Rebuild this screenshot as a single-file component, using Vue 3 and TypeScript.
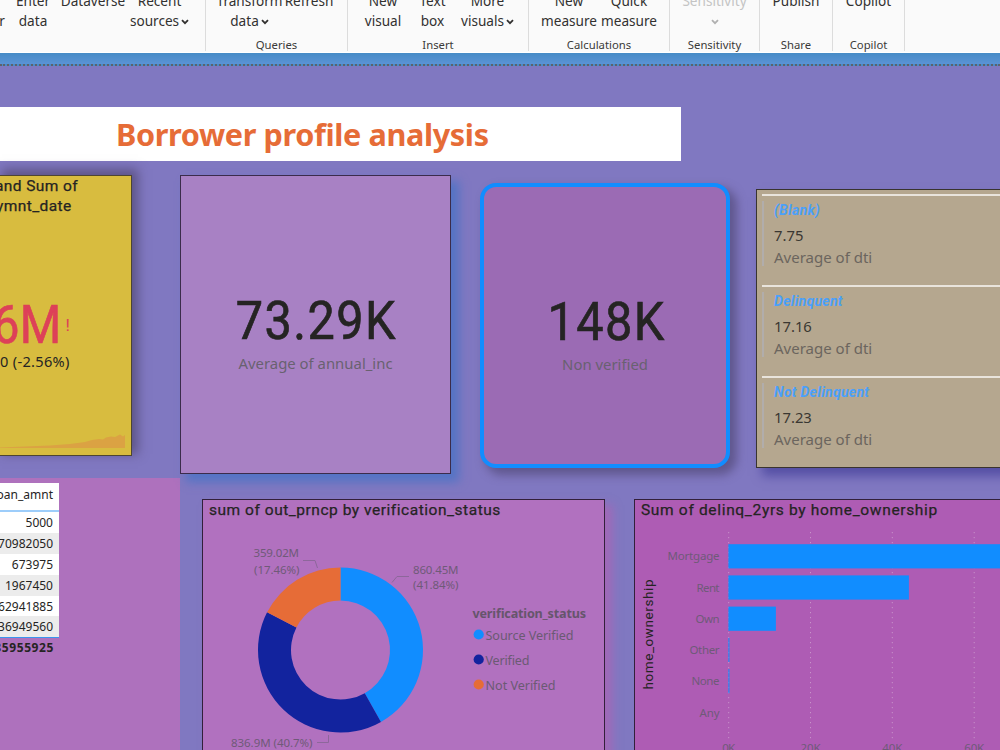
<script setup lang="ts">
import { computed } from 'vue'

interface RibbonButton {
  top: string
  bottom?: string
  width: number
  menu?: boolean
  disabled?: boolean
}

interface RibbonGroup {
  label: string
  width: number
  buttons: RibbonButton[]
}

const groups: RibbonGroup[] = [
  {
    label: '',
    width: 206,
    buttons: [
      { top: '', bottom: 'r', width: 4 },
      { top: 'Enter', bottom: 'data', width: 58 },
      { top: 'Dataverse', width: 62 },
      { top: 'Recent', bottom: 'sources', width: 71, menu: true },
    ],
  },
  {
    label: 'Queries',
    width: 142,
    buttons: [
      { top: 'Transform', bottom: 'data', width: 65, menu: true },
      { top: 'Refresh', width: 54 },
    ],
  },
  {
    label: 'Insert',
    width: 181,
    buttons: [
      { top: 'New', bottom: 'visual', width: 48 },
      { top: 'Text', bottom: 'box', width: 51 },
      { top: 'More', bottom: 'visuals', width: 59, menu: true },
    ],
  },
  {
    label: 'Calculations',
    width: 141,
    buttons: [
      { top: 'New', bottom: 'measure', width: 60 },
      { top: 'Quick', bottom: 'measure', width: 60 },
    ],
  },
  {
    label: 'Sensitivity',
    width: 90,
    buttons: [{ top: 'Sensitivity', bottom: '', width: 70, menu: true, disabled: true }],
  },
  { label: 'Share', width: 73, buttons: [{ top: 'Publish', width: 60 }] },
  { label: 'Copilot', width: 72, buttons: [{ top: 'Copilot', width: 60 }] },
]

const loanRows = ['5000', '270982050', '673975', '1967450', '62941885', '336949560']

const dtiRows = [
  { status: '(Blank)', value: '7.75' },
  { status: 'Delinquent', value: '17.16' },
  { status: 'Not Delinquent', value: '17.23' },
]

const statuses = [
  { name: 'Source Verified', value: 860.45, color: '#118dff', y: 635, length: 88 },
  { name: 'Verified', value: 836.9, color: '#12239e', y: 660, length: 44 },
  { name: 'Not Verified', value: 359.02, color: '#e66c37', y: 685, length: 70 },
]

const cx = 340.5
const cy = 650
const outer = 82.5
const inner = 49.5

function point(radius: number, turn: number) {
  const angle = turn * Math.PI * 2
  return `${(cx + radius * Math.sin(angle)).toFixed(2)} ${(cy - radius * Math.cos(angle)).toFixed(2)}`
}

const slices = computed(() => {
  const total = statuses.reduce((sum, s) => sum + s.value, 0)
  let start = 0
  return statuses.map((s) => {
    const end = start + s.value / total
    const large = end - start > 0.5 ? 1 : 0
    const d = `M${point(outer, start)} A${outer} ${outer} 0 ${large} 1 ${point(outer, end)} L${point(inner, end)} A${inner} ${inner} 0 ${large} 0 ${point(inner, start)} Z`
    start = end
    return { color: s.color, d }
  })
})

const ownership = [
  { name: 'Mortgage', width: 280, length: 52 },
  { name: 'Rent', width: 180.5, length: 23 },
  { name: 'Own', width: 47.5, length: 24 },
  { name: 'Other', width: 1, length: 30 },
  { name: 'None', width: 1, length: 28 },
  { name: 'Any', width: 0, length: 20 },
]

const ticks = [
  { label: '0K', x: 728.7, length: 13 },
  { label: '20K', x: 810.5, length: 20 },
  { label: '40K', x: 892.3, length: 20 },
  { label: '60K', x: 974.2, length: 20 },
]
</script>

<template>
  <div class="app">
    <header class="ribbon">
      <div
        v-for="(group, i) in groups"
        :key="i"
        class="ribbon__group"
        :style="{ width: `${group.width}px` }"
      >
        <div class="ribbon__buttons">
          <div
            v-for="(button, j) in group.buttons"
            :key="j"
            class="ribbon__button"
            :class="{ 'ribbon__button--disabled': button.disabled }"
            :style="{ width: `${button.width}px` }"
          >
            <span>{{ button.top || '&nbsp;' }}</span>
            <span class="ribbon__second">
              {{ button.bottom }}
              <svg v-if="button.menu" class="chevron" width="8" height="6" viewBox="0 0 8 6">
                <path d="M1 1.2 4 4.2 7 1.2" fill="none" stroke="currentColor" stroke-width="1.8" />
              </svg>
            </span>
          </div>
        </div>
        <div class="ribbon__label">{{ group.label }}</div>
      </div>
    </header>

    <div class="strip" />

    <main class="canvas">
      <h1 class="banner">Borrower profile analysis</h1>

      <div class="visuals">
        <div class="side">
          <section class="kpi">
            <div class="kpi__title din">
              <span class="kpi__title-start">and Sum of</span>
              <span class="kpi__title-end">ymnt_date</span>
            </div>
            <div class="kpi__value">
              <span class="kpi__number din">6M</span>
              <span class="kpi__mark din">!</span>
            </div>
            <div class="kpi__goal">0 (-2.56%)</div>
            <svg class="kpi__trend" width="125" height="15" viewBox="0 0 125 15">
              <path
                d="M0 13.5 25 12.5 50 11.5 70 10 85 8 92 6 99 5 103 5.5 106 3.5 111 2.5 115 3 120 .5 123 2.5 125 1V14H0Z"
                fill="#dba243"
              />
            </svg>
          </section>

          <section class="loans">
            <div class="loans__table">
              <div class="loans__head">loan_amnt</div>
              <div v-for="row in loanRows" :key="row" class="loans__row">
                <span>{{ row }}</span>
              </div>
            </div>
            <div class="loans__total"><span>635955925</span></div>
          </section>
        </div>

        <div class="board">
          <div class="row row--cards">
            <section class="card card--income">
              <div class="card__value din">73.29K</div>
              <div class="card__label">Average of annual_inc</div>
            </section>

            <section class="card card--verified">
              <div class="card__value din">148K</div>
              <div class="card__label">Non verified</div>
            </section>

            <section class="dti">
              <div v-for="row in dtiRows" :key="row.status" class="dti__row">
                <div class="dti__body">
                  <div class="dti__status din">{{ row.status }}</div>
                  <div class="dti__value">{{ row.value }}</div>
                  <div class="dti__label">Average of dti</div>
                </div>
              </div>
            </section>
          </div>

          <div class="row row--charts">
            <section class="chart chart--donut">
              <h2 class="chart__title din">sum of out_prncp by verification_status</h2>
              <svg class="chart__plot" width="401" height="229" viewBox="203 521 401 229">
                <path v-for="slice in slices" :key="slice.color" :d="slice.d" :fill="slice.color" />
                <g fill="none" stroke="#8d679b" stroke-width="1">
                  <path d="M303 560.5H315L317.5 568" />
                  <path d="M392 582.5 397 576.5H409" />
                  <path d="M317 742.5H328.5V735" />
                </g>
                <g class="chart__text">
                  <text x="253.5" y="557" textLength="45.5">359.02M</text>
                  <text x="254" y="573.5" textLength="45.5">(17.46%)</text>
                  <text x="413" y="573.5" textLength="45.5">860.45M</text>
                  <text x="413" y="589" textLength="45.5">(41.84%)</text>
                  <text x="231" y="746.5" textLength="81.5">836.9M (40.7%)</text>
                </g>
                <text class="chart__legend-title" x="472.5" y="618" textLength="113.5">verification_status</text>
                <g v-for="s in statuses" :key="s.name">
                  <circle cx="478.7" :cy="s.y - 0.5" r="5.1" :fill="s.color" />
                  <text class="chart__legend" x="485.5" :y="s.y + 5" :textLength="s.length">{{ s.name }}</text>
                </g>
              </svg>
            </section>

            <section class="chart chart--bars">
              <h2 class="chart__title chart__title--wide din">Sum of delinq_2yrs by home_ownership</h2>
              <svg class="chart__plot" width="365" height="229" viewBox="635 521 365 229">
                <line
                  v-for="tick in ticks"
                  :key="tick.label"
                  class="chart__grid"
                  :x1="tick.x"
                  :x2="tick.x"
                  y1="532"
                  y2="739"
                />
                <g v-for="(bar, i) in ownership" :key="bar.name">
                  <rect x="728.4" :y="544.2 + i * 31.2" :width="bar.width" height="24.2" fill="#118dff" />
                  <text
                    class="chart__text"
                    :x="719.5 - bar.length"
                    :y="560.2 + i * 31.3"
                    :textLength="bar.length"
                  >{{ bar.name }}</text>
                </g>
                <text
                  v-for="tick in ticks"
                  :key="tick.label"
                  class="chart__text"
                  :x="tick.x - tick.length / 2"
                  y="751.5"
                  :textLength="tick.length"
                >{{ tick.label }}</text>
                <text class="chart__axis din" transform="translate(652.5 689.5) rotate(-90)" textLength="110">home_ownership</text>
              </svg>
            </section>
          </div>
        </div>
      </div>
    </main>
  </div>
</template>

<style>
body {
  margin: 0;
  overflow: hidden;
}
</style>

<style scoped>
.app {
  display: flex;
  flex-direction: column;
  width: 1000px;
  height: 750px;
  overflow: hidden;
  font-family: 'Noto Sans', 'Open Sans', sans-serif;
  color: #252423;
}

.app * {
  box-sizing: border-box;
}

.din {
  font-family: Roboto, sans-serif;
}

/* Ribbon */
.ribbon {
  display: flex;
  flex: none;
  height: 53px;
  background: #fafafa;
  border-bottom: 1px solid #fff;
}

.ribbon__group {
  display: flex;
  flex: none;
  flex-direction: column;
  height: 51px;
  border-right: 1px solid #dcdcdc;
}

.ribbon__buttons {
  display: flex;
  justify-content: center;
  height: 39px;
  margin-top: -9px;
}

.ribbon__group:first-child .ribbon__buttons {
  justify-content: flex-start;
}

.ribbon__button {
  display: flex;
  flex: none;
  flex-direction: column;
  align-items: center;
  font-size: 13.6px;
  line-height: 19.5px;
  white-space: nowrap;
  color: #323130;
}

.ribbon__button--disabled {
  color: #c4c4c4;
}

.ribbon__second {
  display: flex;
  align-items: center;
  gap: 2px;
  min-height: 20px;
}

.chevron {
  margin-top: 2px;
}

.ribbon__button--disabled .chevron {
  color: #b0b0b0;
}

.ribbon__label {
  margin-top: 7px;
  font-size: 11.3px;
  line-height: 16px;
  text-align: center;
  color: #3b3a39;
}

.strip {
  flex: none;
  height: 13px;
  background: linear-gradient(#468bc6, #5b93d5);
  border-bottom: 2px dotted #5d626c;
}

/* Report canvas */
.canvas {
  flex: 1;
  padding-top: 41px;
  overflow: hidden;
  background: #8078c1;
}

.banner {
  width: 681px;
  height: 54px;
  margin: 0;
  padding-left: 116px;
  background: #fff;
  font-size: 30.6px;
  line-height: 55px;
  font-weight: 700;
  letter-spacing: -0.36px;
  white-space: nowrap;
  color: #e66c37;
}

.visuals {
  display: flex;
  margin-top: 14px;
}

.side {
  display: flex;
  flex: none;
  flex-direction: column;
  gap: 22px;
  width: 180px;
}

.kpi {
  width: 132px;
  height: 281px;
  border: 1.5px solid #4d4532;
  border-left: 0;
  background: #d8bc3f;
  box-shadow: 4px -4px 10px 2px rgba(60, 50, 80, 0.5);
}

.kpi__title {
  display: flex;
  flex-direction: column;
  height: 42px;
  font-size: 15.5px;
  line-height: 20px;
  letter-spacing: 0.4px;
  white-space: nowrap;
  -webkit-text-stroke: 0.25px currentColor;
}

.kpi__title-start {
  margin-left: -5px;
}

.kpi__title-end {
  margin-left: -4px;
}

.kpi__value {
  display: flex;
  align-items: center;
  height: 54px;
  margin-top: 80px;
  color: #dd4158;
}

.kpi__number {
  margin-left: -12px;
  font-size: 54px;
  line-height: 54px;
  letter-spacing: 0.5px;
  transform: scaleX(0.88);
  -webkit-text-stroke: 0.7px currentColor;
}

.kpi__mark {
  margin-left: -1px;
  font-size: 17px;
}

.kpi__goal {
  height: 20px;
  font-size: 14.6px;
  line-height: 18px;
  letter-spacing: 0.3px;
  white-space: nowrap;
}

.kpi__trend {
  display: block;
  margin-top: 62px;
}

.loans {
  height: 280px;
  padding-top: 5px;
  background: #ae71bd;
}

.loans__table {
  width: 59px;
  background: #fff;
  border-bottom: 1.5px solid #3a95ee;
}

.loans__head,
.loans__row,
.loans__total {
  display: flex;
  justify-content: flex-end;
  width: 59px;
  padding-right: 6px;
  font-size: 12px;
}

.loans__head {
  height: 29px;
  border-bottom: 2px solid #9dcdfa;
  line-height: 24px;
}

.loans__row {
  height: 20.9px;
  line-height: 22px;
}

.loans__row:nth-child(odd) {
  background: #ececec;
}

.loans__total {
  padding-right: 5px;
  font-weight: 700;
  line-height: 20px;
  letter-spacing: 0.6px;
}

.board {
  flex: 1;
  min-width: 0;
}

.row {
  display: flex;
}

.row--cards {
  height: 299px;
}

/* Single-value cards */
.card {
  display: flex;
  flex: none;
  flex-direction: column;
  align-items: center;
}

.card--income {
  width: 271px;
  height: 299px;
  padding-top: 114px;
  border: 1px solid #3b2c4b;
  background: #a881c4;
  box-shadow: 7px 7px 9px 1px rgba(70, 115, 198, 0.75);
}

.card--verified {
  width: 250px;
  height: 285px;
  margin: 8px 0 0 29px;
  padding-top: 104px;
  border: 4px solid #118dff;
  border-radius: 16px;
  background: #9b6bb4;
  box-shadow: 6px 6px 10px 1px rgba(70, 60, 100, 0.55);
}

.card__value {
  padding-left: 3px;
  font-size: 54px;
  line-height: 62px;
  letter-spacing: 1.6px;
  white-space: nowrap;
  transform: scaleX(0.9);
  -webkit-text-stroke: 0.7px currentColor;
}

.card__label {
  font-size: 14.9px;
  line-height: 22px;
  white-space: nowrap;
  color: #696170;
}

/* Multi-row card */
.dti {
  flex: none;
  width: 260px;
  height: 279px;
  margin: 14px 0 0 26px;
  padding: 4px 0 0 5px;
  border: 1px solid #39342f;
  background: #b5a78f;
  box-shadow: 6px 8px 10px rgba(70, 66, 155, 0.75);
}

.dti__row {
  height: 91.2px;
  padding-top: 5px;
  border-top: 2px solid #e9e4dc;
}

.dti__body {
  height: 65px;
  padding-left: 10px;
  border-left: 2px solid #b1adab;
}

.dti__status {
  font-size: 14px;
  line-height: 19px;
  font-weight: 700;
  font-style: italic;
  letter-spacing: 0.3px;
  color: #4ba0fa;
}

.dti__value {
  margin-top: 3px;
  font-size: 14.8px;
  line-height: 24px;
  color: #3a3732;
}

.dti__label {
  font-size: 15px;
  line-height: 20px;
  color: #6b655e;
}

/* Charts */
.row--charts {
  gap: 29px;
  margin-top: 25px;
  padding-left: 22px;
}

.chart {
  flex: none;
  height: 260px;
  border: 1px solid #32203a;
}

.chart--donut {
  width: 403px;
  background: #b171bf;
  box-shadow: 7px 6px 9px rgba(176, 98, 180, 0.7);
}

.chart--bars {
  width: 380px;
  background: #ae5cb4;
}

.chart__title {
  height: 21px;
  margin: 0;
  padding-left: 6px;
  font-size: 15.5px;
  line-height: 21px;
  font-weight: 400;
  letter-spacing: 0.53px;
  white-space: nowrap;
  -webkit-text-stroke: 0.25px currentColor;
}

.chart__title--wide {
  letter-spacing: 0.67px;
}

.chart__plot {
  display: block;
}

.chart__text {
  font-size: 11.5px;
  fill: #6f5a78;
}

.chart__legend {
  font-size: 12.6px;
  fill: #6b5a73;
}

.chart__legend-title {
  font-size: 12.6px;
  font-weight: 700;
  fill: #66556c;
}

.chart__axis {
  font-size: 13.5px;
  fill: #252423;
}

.chart__grid {
  stroke: #c792ca;
  stroke-width: 1;
  stroke-dasharray: 1.2 3.8;
}
</style>
